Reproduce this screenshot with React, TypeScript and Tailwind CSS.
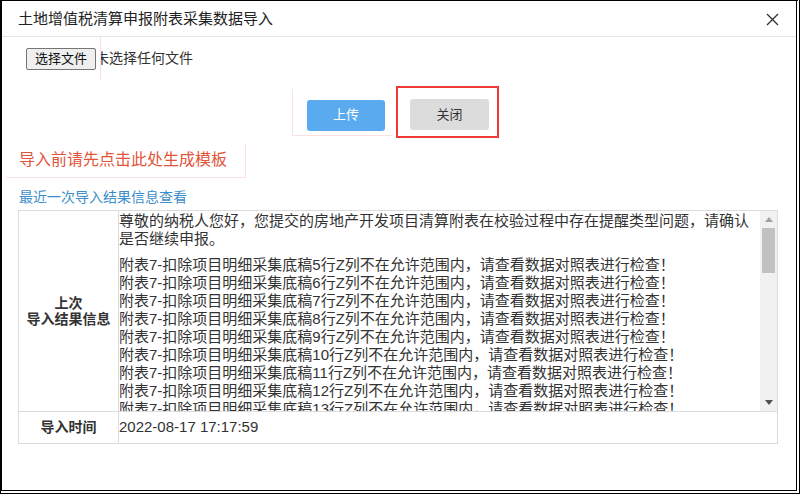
import React from 'react'

const ROWS = [5, 6, 7, 8, 9, 10, 11, 12, 13, 14, 15, 16, 17, 18]

function ScrollBar() {
  return (
    <div className="w-[17px] shrink-0 bg-[#f1f1f1] flex flex-col">
      <div className="h-[17px] flex items-center justify-center">
        <svg width="8" height="5" viewBox="0 0 8 5">
          <polygon points="0,5 8,5 4,0" fill="#a3a3a3" />
        </svg>
      </div>
      <div className="h-[45px] mx-[2px] bg-[#c1c1c1]" />
      <div className="flex-1" />
      <div className="h-[17px] flex items-center justify-center">
        <svg width="8" height="5" viewBox="0 0 8 5">
          <polygon points="0,0 8,0 4,5" fill="#505050" />
        </svg>
      </div>
    </div>
  )
}

export default function App() {
  return (
    <div className="w-[800px] h-[494px] bg-white border-l-2 border-t border-r-4 border-b-4 border-double border-black font-['Liberation_Sans','Noto_Sans_CJK_SC',sans-serif] text-[#333] flex flex-col overflow-hidden">
      {/* header */}
      <div className="h-[36px] shrink-0 border-b border-[#e5e5e5] flex items-center justify-between pl-[16px] pr-[17px]">
        <span className="text-[15px] leading-[20px] text-[#222]">土地增值税清算申报附表采集数据导入</span>
        <svg width="13" height="13" viewBox="0 0 13 13" className="mt-[1px]">
          <path d="M1 1 L12 12 M12 1 L1 12" stroke="#333" strokeWidth="1.4" fill="none" />
        </svg>
      </div>

      {/* file chooser */}
      <div className="h-[43px] shrink-0 flex items-center pl-[24px]">
        <button className="w-[70px] h-[22px] text-[13px] leading-none bg-[#efefef] border border-[#767676] rounded-[2px] text-[#111]">
          选择文件
        </button>
        <div className="ml-[4px] self-stretch border-l border-[#fbe1e1] overflow-hidden flex items-center">
          <span className="-ml-[6px] text-[14px] whitespace-nowrap text-[#333]">未选择任何文件</span>
        </div>
      </div>

      {/* buttons */}
      <div className="mt-[6px] h-[52px] shrink-0 flex items-center pl-[290px]">
        <div className="border-l border-b border-[#fbe1e1] pl-[14px] pr-[8px] pt-[11px] pb-[4px]">
          <button className="w-[78px] h-[31px] bg-[#5aaaf0] text-white text-[13px] rounded-[3px]">上传</button>
        </div>
        <div className="ml-[3px] border-2 border-[#f03a3a] pl-[12px] pr-[8px] pt-[11px] pb-[6px]">
          <button className="w-[79px] h-[31px] bg-[#dcdcdc] text-[#333] text-[13px] rounded-[3px]">关闭</button>
        </div>
      </div>

      {/* template link */}
      <div className="mt-[5px] ml-[4px] w-[240px] h-[35px] shrink-0 border-r border-b border-[#fbe1e1] flex items-center pl-[13px] text-[16px] text-[#e2553a]">
        导入前请先点击此处生成模板
      </div>

      <div className="mt-[10px] pl-[17px] text-[14px] leading-[18px] text-[#3d8ec9]">最近一次导入结果信息查看</div>

      {/* result table */}
      <div className="mt-[4px] ml-[16px] w-[760px] shrink-0 border border-[#dcdcdc]">
        <div className="h-[201px] flex border-b border-[#dcdcdc]">
          <div className="w-[100px] shrink-0 border-r border-[#dcdcdc] flex flex-col items-center justify-center font-bold text-[14px] leading-[16px] text-[#333]">
            <span>上次</span>
            <span>导入结果信息</span>
          </div>
          <div className="flex-1 flex min-w-0">
            <div className="flex-1 overflow-hidden pt-[1px] text-[15px] leading-[18px] text-[#333]">
              <p className="mb-[8px]">
                尊敬的纳税人您好，您提交的房地产开发项目清算附表在校验过程中存在提醒类型问题，请确认是否继续申报。
              </p>
              {ROWS.map((n) => (
                <div key={n} className="whitespace-nowrap">
                  附表7-扣除项目明细采集底稿{n}行Z列不在允许范围内，请查看数据对照表进行检查！
                </div>
              ))}
            </div>
            <ScrollBar />
          </div>
        </div>
        <div className="h-[31px] flex">
          <div className="w-[100px] shrink-0 border-r border-[#dcdcdc] flex items-center justify-center font-bold text-[14px] text-[#333]">
            导入时间
          </div>
          <div className="flex-1 flex items-center text-[15px] text-[#333]">2022-08-17 17:17:59</div>
        </div>
      </div>
    </div>
  )
}
